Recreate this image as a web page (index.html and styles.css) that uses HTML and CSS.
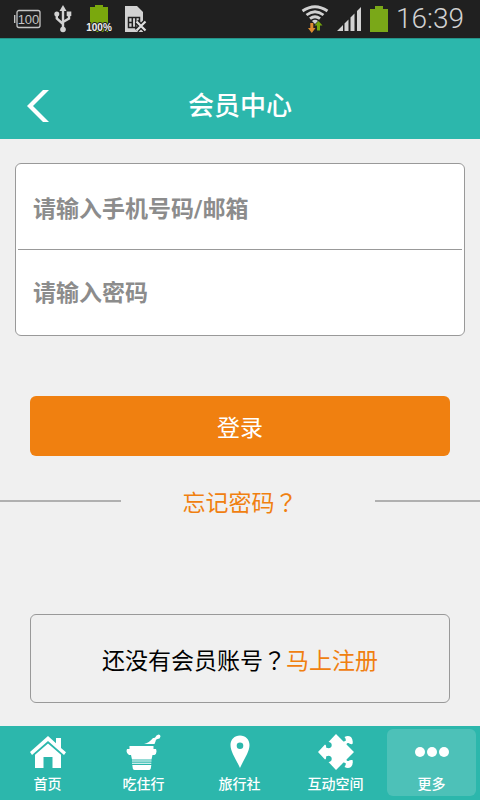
FILE: index.html
```html
<!DOCTYPE html>
<html lang="zh-CN">
<head>
<meta charset="utf-8">
<meta name="viewport" content="width=device-width, initial-scale=1">
<title>会员中心</title>
<link rel="stylesheet" href="styles.css">
</head>
<body>
<div class="status">
  <div class="status-left">
    <svg width="28" height="20" viewBox="0 0 28 20"><rect x="3" y="1.500" width="23" height="17" rx="2" fill="none" stroke="#c4c4c4" stroke-width="1.300"/><path d="M.7 6v8" stroke="#c4c4c4" stroke-width="1.400"/><text class="level" x="14.500" y="14.500" text-anchor="middle">100</text></svg>
    <svg class="usb" width="18" height="28" viewBox="0 0 18 28" fill="#d2d2d2"><path d="M9 0l3.500 6h-7z"/><circle cx="9" cy="24.500" r="2.800"/><circle cx="2.800" cy="9" r="2.500"/><path d="M12.700 6.500h4.600v4.600h-4.600z"/><path d="M9 4v20M2.800 9v4.500L9 19M15 9v4.500L9 17" fill="none" stroke="#d2d2d2" stroke-width="2.400"/></svg>
    <svg class="charge" width="28" height="28" viewBox="0 0 28 28"><path d="M5 2h5V0h8v2h5v25H5z" fill="#7aa80d"/><text class="percent" x="14" y="26" text-anchor="middle">100%</text></svg>
    <svg class="sim" width="23" height="27" viewBox="0 0 23 27"><path d="M1 0h12l6 6v20H1z" fill="#d2d2d2"/><path d="M4.500 11.500h11v10h-11zM8.300 11.500v10M11.800 11.500v10M4.500 16.500h4M12 16.500h4" fill="none" stroke="#222" stroke-width="1.500"/><path d="M12.500 15.500l9 9m0-9l-9 9" stroke="#222" stroke-width="5"/><path d="M12.500 15.500l9 9m0-9l-9 9" stroke="#e0e0e0" stroke-width="2.200"/></svg>
  </div>
  <div class="status-right">
    <svg width="28" height="28" viewBox="0 0 28 28"><g fill="none" stroke="#d2d2d2" stroke-width="2.800"><path d="M1.500 6q12.500-8.500 25 0"/><path d="M5.500 10q8.500-6.500 17 0"/><path d="M9 13.700q5-4 10 0"/></g><path d="M11 16q3-2.500 6 0l-3 3z" fill="#d2d2d2"/><path d="M9.300 18h3v5h2.200L10.800 28 7 23h2.300z" fill="#de8b2f"/><path d="M16 25.500h3v-5h2.500L17.500 16l-4 4.500H16z" fill="#74a60e"/></svg>
    <svg class="signal" width="25" height="25" viewBox="0 0 25 25" fill="#d2d2d2"><path d="M0 24l6-6v6zM7.500 16.500l4-4V24h-4zM13.500 10.500l4-4V24h-4zM20 4l4-4v24h-4z"/></svg>
    <svg width="18" height="26" viewBox="0 0 18 26"><path d="M0 3h5V0h8v3h5v23H0z" fill="#7aa818"/></svg>
    <time>16:39</time>
  </div>
</div>
<header class="header">
  <button class="back" type="button" aria-label="返回"><svg width="22" height="32" viewBox="0 0 22 32"><path d="M16 0h6L6 16l16 16h-6L0 16z" fill="#fff"/></svg></button>
  <h1>会员中心</h1>
</header>
<main class="main">
  <form class="form">
    <div class="fields">
      <input type="text" aria-label="手机号码/邮箱" placeholder="请输入手机号码/邮箱">
      <input type="password" aria-label="密码" placeholder="请输入密码">
    </div>
    <button class="login" type="button">登录</button>
  </form>
  <div class="forgot"><a href="#">忘记密码<span class="mark" lang="zh-TW">？</span></a></div>
  <p class="register">还没有会员账号<span class="mark" lang="zh-TW">？</span><a href="#">马上注册</a></p>
</main>
<nav class="nav">
  <a href="#"><svg width="36" height="36" viewBox="0 0 36 36" fill="#fff"><path d="M18 2l8 7.300V4h5v10l5 4.300-2 2.600L18 7 2 21l-2-3z"/><path d="M18 9.500l13 11.300V34h-8.500V23h-9v11H5V20.800z"/></svg>首页</a>
  <a href="#"><svg width="36" height="36" viewBox="0 0 36 36" fill="#fff"><path d="M18 10q5-1 9-6 2 .3 2.500-1 .5-2 3-2.500 2 0 2 2-.5 2.500-3 2.500-2 .2-2 2.500l-1 2.500z"/><path d="M3.500 12h24v3h2.500q1.500 4-1.500 6h-2l-1 4.500H6L5 21H3q-3.500-2-2-6h2.500z"/><path d="M6 26.500h19.500v1H6zM6 28.700h19.300v1H6zM6.300 31h19l-.5 3.500q-.5 1.500-2 1.500h-14q-1.500 0-2-1.500z"/></svg>吃住行</a>
  <a href="#"><svg width="36" height="36" viewBox="0 0 36 36" fill="#fff"><path fill-rule="evenodd" d="M18 1.500c-5.500 0-9.500 4-9.500 9.500C8.500 18 14.500 26 18 34c3.500-8 9.500-16 9.500-23 0-5.500-4-9.500-9.500-9.500zm0 7a3.300 3.300 0 1 1 0 6.600 3.300 3.300 0 0 1 0-6.600z"/></svg>旅行社</a>
  <a href="#"><svg width="36" height="36" viewBox="0 0 36 36" fill="#fff"><path d="M0 18L7 10.500Q8.500 11 8 13.500Q12 15.500 13.500 12.500Q14.500 8.500 10.500 8L18 0L24.500 6.500Q25 8 27.500 7Q28.500 5.500 26.500 3Q30 1 33 3Q35.500 6 34.500 10Q32 10.500 30.500 9Q28.500 8.500 28.500 10.500L36 18L28.500 25.500Q28.500 27.500 30.500 27Q32 25.500 34.500 26Q35.500 30 33 33Q30 35 26.500 33Q28.500 30.500 27.500 29Q25 28 24.500 29.500L18 36L10.500 28Q14.500 27.500 13.500 23.500Q12 20.500 8 22.500Q8.500 25 7 25.500Z"/></svg>互动空间</a>
  <a href="#" class="active" aria-current="page"><svg width="36" height="36" viewBox="0 0 36 36" fill="#fff"><circle cx="6" cy="18" r="5"/><circle cx="18" cy="18" r="5"/><circle cx="30" cy="18" r="5"/></svg>更多</a>
</nav>
</body>
</html>
```
FILE: styles.css
```css
* { box-sizing: border-box; }

body {
  margin: 0;
  min-height: 100vh;
  display: flex;
  flex-direction: column;
  background: #f0f0f0;
  color: #000;
  font-family: Roboto, "Noto Sans CJK SC", sans-serif;
  font-size: 23px;
}

a { color: #f08010; text-decoration: none; }
svg { display: block; flex: none; }
button, input { font: inherit; border: 0; padding: 0; }

.status {
  display: flex;
  justify-content: space-between;
  height: 38px;
  padding: 0 16px 0 14px;
  background: #202020;
}
.status-left, .status-right { display: flex; align-items: center; }
.usb { margin-left: 12px; }
.charge { margin-left: 13px; }
.sim { margin-left: 11px; }
.level { font: 13px "Liberation Sans", sans-serif; fill: #c4c4c4; }
.percent {
  font: bold 10px "Liberation Sans", sans-serif;
  fill: #eee;
  stroke: #202020;
  stroke-width: 2px;
  paint-order: stroke;
}
.status-right { gap: 8px; }
.status time { color: #d2d2d2; font-size: 28px; line-height: 36px; font-weight: 300; }

.header {
  display: grid;
  grid-template-columns: 76px 1fr 76px;
  align-items: center;
  height: 101px;
  padding-top: 34px;
  background: #2cb7ac;
  border-top: 1px solid #259389;
  color: #fff;
}
.header h1 {
  margin: 0;
  text-align: center;
  font-size: 26px;
  font-weight: 500;
  line-height: 36px;
}
.back { justify-self: center; background: none; }

.main { flex: 1; padding: 24px 0 20px; }
.fields {
  margin: 0 15px;
  padding: 0 2px;
  background: #fff;
  border: 1px solid #999;
  border-radius: 6px;
}
.fields input {
  display: block;
  width: 100%;
  height: 86px;
  padding: 6px 15px 0;
  background: none;
  outline: none;
}
.fields input + input { height: 85px; padding-top: 2px; }
.fields input:first-child { border-bottom: 1px solid #999; }
.fields input::placeholder { color: #8c8c8c; font-weight: 700; opacity: 1; }

.login {
  display: block;
  width: calc(100% - 60px);
  height: 60px;
  margin: 60px 30px 0;
  background: #f08010;
  border-radius: 6px;
  color: #fff;
}

.forgot {
  display: grid;
  grid-template-columns: 1fr auto 1fr;
  align-items: center;
  height: 40px;
  margin-top: 25px;
}
.forgot::before, .forgot::after { content: ""; height: 2px; background: #b0b0b0; }
.forgot::before { margin-right: 62px; }
.forgot::after { margin-left: 77px; }
.mark {
  font-family: "Noto Sans CJK TC", sans-serif;
  text-spacing-trim: space-all;
}

.register {
  display: flex;
  align-items: center;
  justify-content: center;
  height: 89px;
  margin: 93px 30px 0;
  border: 1px solid #999;
  border-radius: 6px;
}

.nav {
  display: grid;
  grid-template-columns: repeat(5, 1fr);
  height: 74px;
  padding: 3px 0 4px;
  background: #2cb7ac;
}
.nav a {
  display: flex;
  flex-direction: column;
  align-items: center;
  gap: 4px;
  margin: 0 4px 0 3px;
  padding-top: 5px;
  border-radius: 6px;
  color: #fff;
  font-size: 14px;
  font-weight: 500;
  line-height: 20px;
}
.nav .active { background: #4dc1b8; }
```
